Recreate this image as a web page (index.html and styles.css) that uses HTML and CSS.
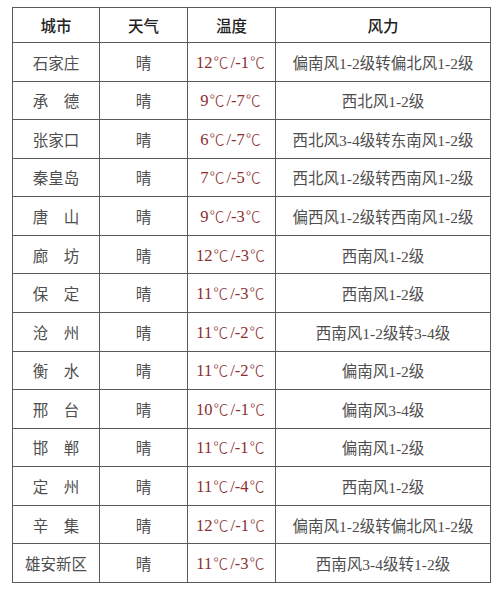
FILE: index.html
```html
<!DOCTYPE html>
<html lang="zh">
<head>
<meta charset="utf-8">
<link rel="stylesheet" href="styles.css">
</head>
<body>
<table class="weather">
  <colgroup>
    <col class="c-city"><col class="c-sky"><col class="c-temp"><col class="c-wind">
  </colgroup>
  <thead>
    <tr><th>城市</th><th>天气</th><th>温度</th><th>风力</th></tr>
  </thead>
  <tbody>
    <tr><td>石家庄</td><td>晴</td><td class="t">12<span class="u">℃</span>/-1<span class="u">℃</span></td><td>偏南风1-2级转偏北风1-2级</td></tr>
    <tr><td>承　德</td><td>晴</td><td class="t">9<span class="u">℃</span>/-7<span class="u">℃</span></td><td>西北风1-2级</td></tr>
    <tr><td>张家口</td><td>晴</td><td class="t">6<span class="u">℃</span>/-7<span class="u">℃</span></td><td>西北风3-4级转东南风1-2级</td></tr>
    <tr><td>秦皇岛</td><td>晴</td><td class="t">7<span class="u">℃</span>/-5<span class="u">℃</span></td><td>西北风1-2级转西南风1-2级</td></tr>
    <tr><td>唐　山</td><td>晴</td><td class="t">9<span class="u">℃</span>/-3<span class="u">℃</span></td><td>偏西风1-2级转西南风1-2级</td></tr>
    <tr><td>廊　坊</td><td>晴</td><td class="t">12<span class="u">℃</span>/-3<span class="u">℃</span></td><td>西南风1-2级</td></tr>
    <tr><td>保　定</td><td>晴</td><td class="t">11<span class="u">℃</span>/-3<span class="u">℃</span></td><td>西南风1-2级</td></tr>
    <tr><td>沧　州</td><td>晴</td><td class="t">11<span class="u">℃</span>/-2<span class="u">℃</span></td><td>西南风1-2级转3-4级</td></tr>
    <tr><td>衡　水</td><td>晴</td><td class="t">11<span class="u">℃</span>/-2<span class="u">℃</span></td><td>偏南风1-2级</td></tr>
    <tr><td>邢　台</td><td>晴</td><td class="t">10<span class="u">℃</span>/-1<span class="u">℃</span></td><td>偏南风3-4级</td></tr>
    <tr><td>邯　郸</td><td>晴</td><td class="t">11<span class="u">℃</span>/-1<span class="u">℃</span></td><td>偏南风1-2级</td></tr>
    <tr><td>定　州</td><td>晴</td><td class="t">11<span class="u">℃</span>/-4<span class="u">℃</span></td><td>西南风1-2级</td></tr>
    <tr><td>辛　集</td><td>晴</td><td class="t">12<span class="u">℃</span>/-1<span class="u">℃</span></td><td>偏南风1-2级转偏北风1-2级</td></tr>
    <tr><td>雄安新区</td><td>晴</td><td class="t">11<span class="u">℃</span>/-3<span class="u">℃</span></td><td>西南风3-4级转1-2级</td></tr>
  </tbody>
</table>
</body>
</html>
```
FILE: styles.css
```css
html, body {
  margin: 0;
  padding: 0;
  background: #ffffff;
}

body {
  padding: 7px 0 0 12px;
  font-family: "Liberation Serif", "Noto Sans CJK SC", serif;
  font-size: 15.5px;
  color: #4e4e4e;
}

.weather {
  border-collapse: collapse;
  table-layout: fixed;
  width: 478px;
}

.c-city { width: 87px; }
.c-sky { width: 88px; }
.c-temp { width: 88px; }
.c-wind { width: 215px; }

.weather th,
.weather td {
  border: 1px solid #5a5a5a;
  text-align: center;
  vertical-align: middle;
  padding: 0;
  white-space: nowrap;
}

.weather thead tr {
  height: 35px;
}

.weather th {
  font-weight: 500;
  color: #222222;
}

.weather tbody tr {
  height: 38.57px;
}

.weather td.t {
  color: #8a2e2e;
  font-size: 16.5px;
}

.weather .u {
  font-family: "Noto Sans CJK SC", sans-serif;
  font-size: 15px;
  font-weight: 300;
  padding: 0 2px 0 1px;
}
```
